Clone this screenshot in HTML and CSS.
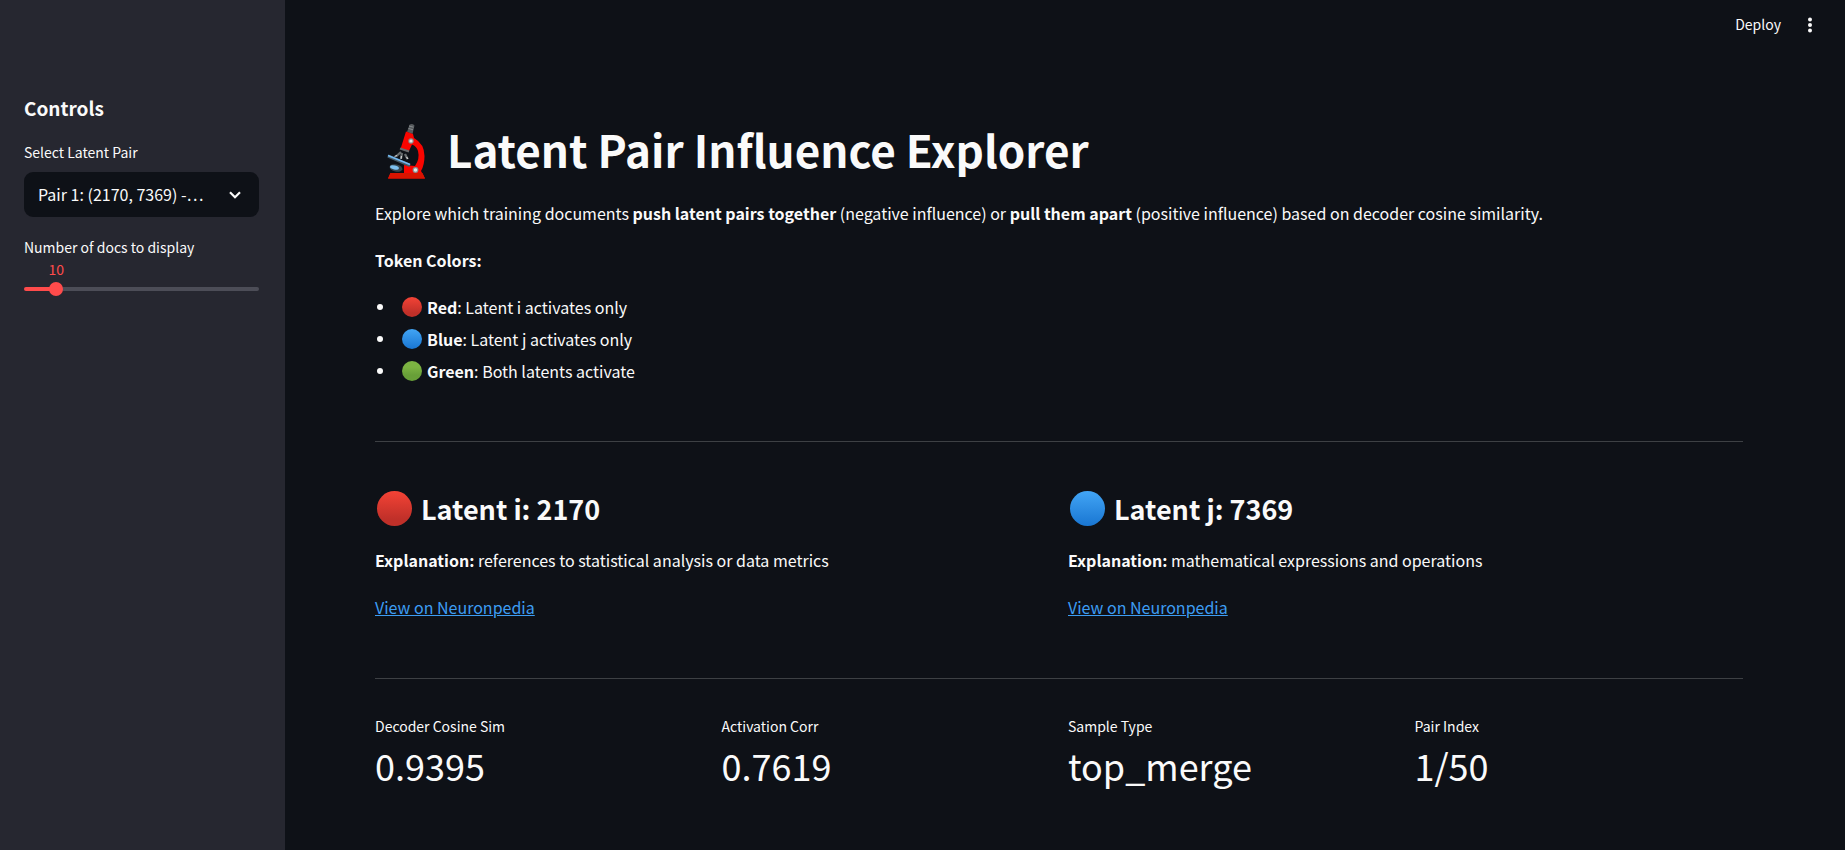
FILE: index.html
```html
<!DOCTYPE html>
<html lang="en">
<head>
  <meta charset="UTF-8">
  <meta name="viewport" content="width=device-width, initial-scale=1.0">
  <title>Latent Pair Influence Explorer</title>
  <link rel="stylesheet" href="styles.css">
</head>
<body>
  <!-- shared gradients for the token dots -->
  <svg class="defs" width="0" height="0" aria-hidden="true">
    <defs>
      <linearGradient id="dot-red" x1="0" y1="0" x2="0" y2="1">
        <stop offset="0" stop-color="#f44336"/>
        <stop offset="0.8" stop-color="#c03029"/>
      </linearGradient>
      <linearGradient id="dot-blue" x1="0" y1="0" x2="0" y2="1">
        <stop offset="0" stop-color="#42a5f5"/>
        <stop offset="1" stop-color="#1976d2"/>
      </linearGradient>
      <linearGradient id="dot-green" x1="0" y1="0" x2="0" y2="1">
        <stop offset="0.3" stop-color="#7cb342"/>
        <stop offset="0.7" stop-color="#689f38"/>
      </linearGradient>
    </defs>
  </svg>

  <div class="app">
    <aside class="sidebar">
      <h2>Controls</h2>

      <div class="form-group">
        <label for="pairSelect">Select Latent Pair</label>
        <div class="select-wrap">
          <select id="pairSelect">
            <option>Pair 1: (2170, 7369) -…</option>
          </select>
          <svg class="chevron" viewBox="0 0 12 8" aria-hidden="true">
            <path d="M1 1.2 L6 6.2 L11 1.2" fill="none" stroke="#fafafa" stroke-width="2.2"/>
          </svg>
        </div>
      </div>

      <div class="form-group">
        <label for="docCount">Number of docs to display</label>
        <div class="slider" style="--pos: 11.1%">
          <output for="docCount">10</output>
          <input type="range" id="docCount" min="5" max="50" value="10">
        </div>
      </div>
    </aside>

    <div class="content">
      <header class="toolbar">
        <button class="deploy">Deploy</button>
        <button class="menu" aria-label="Main menu">
          <svg viewBox="0 0 4 16" aria-hidden="true">
            <circle cx="2" cy="2.4" r="2"/>
            <circle cx="2" cy="8" r="2"/>
            <circle cx="2" cy="13.6" r="2"/>
          </svg>
        </button>
      </header>

      <main>
        <h1>
          <svg class="microscope" viewBox="0 0 38 56" aria-hidden="true">
            <path d="M20 9 L22.5 1.8 Q25 0 27.5 2.5 L25.5 11 Z" fill="#55595c"/>
            <path d="M22 3 L26.5 4.2 M21.4 5.4 L26 6.8" stroke="#85898c" stroke-width="1"/>
            <path d="M19 8.5 L26 11 L27 15 Q37.5 21 37.5 33 Q37.5 42 34 48 L38 55.5 H1 L3.5 50 H17 V42 L28 43 Q33 36 31 28 Q29.5 23 25 21.5 L21.5 29 L13.5 26 Z" fill="#fa0500"/>
            <path d="M3.5 50 H35.5 L38 55.5 H1 Z" fill="#d91400"/>
            <path d="M13 25.5 L22 28.5 M14 29 L9 33.5 M15 30 L14 35.5 M18 31 L20.5 36" stroke="#686c6e" stroke-width="2.3"/>
            <path d="M10 32.5 L7.5 33.5 M14.5 33 L14 36 M19.5 34 L21 36" stroke="#d4d4d4" stroke-width="1.2"/>
            <path d="M1 33 L23 42.5" stroke="#465b68" stroke-width="3"/>
            <path d="M1 32.5 L23 41.5" stroke="#72b8f2" stroke-width="1.7"/>
            <ellipse cx="9" cy="45" rx="6.5" ry="3.5" transform="rotate(12 9 45)" fill="#37474f"/>
            <ellipse cx="7.5" cy="44.5" rx="4.5" ry="2" transform="rotate(12 7.5 44.5)" fill="#7dc0f0"/>
            <circle cx="24" cy="18" r="2.7" fill="#8a8f8f"/>
            <circle cx="24" cy="18" r="1.6" fill="#e4e4e4"/>
            <circle cx="28.5" cy="47" r="2.9" fill="#8a8f8f"/>
            <circle cx="28.5" cy="47" r="1.8" fill="#e4e4e4"/>
          </svg>
          Latent Pair Influence Explorer
        </h1>

        <p>Explore which training documents <strong>push latent pairs together</strong> (negative influence) or <strong>pull them apart</strong> (positive influence) based on decoder cosine similarity.</p>
        <p><strong>Token Colors:</strong></p>

        <ul class="legend">
          <li>
            <svg class="dot" viewBox="0 0 20 20" aria-hidden="true"><circle cx="10" cy="10" r="10" fill="url(#dot-red)"/></svg>
            <span><strong>Red</strong>: Latent i activates only</span>
          </li>
          <li>
            <svg class="dot" viewBox="0 0 20 20" aria-hidden="true"><circle cx="10" cy="10" r="10" fill="url(#dot-blue)"/></svg>
            <span><strong>Blue</strong>: Latent j activates only</span>
          </li>
          <li>
            <svg class="dot" viewBox="0 0 20 20" aria-hidden="true"><circle cx="10" cy="10" r="10" fill="url(#dot-green)"/></svg>
            <span><strong>Green</strong>: Both latents activate</span>
          </li>
        </ul>

        <hr>

        <div class="latents">
          <section>
            <h3>
              <svg class="dot" viewBox="0 0 20 20" aria-hidden="true"><circle cx="10" cy="10" r="10" fill="url(#dot-red)"/></svg>
              Latent i: 2170
            </h3>
            <p><strong>Explanation:</strong> references to statistical analysis or data metrics</p>
            <p><a href="#">View on Neuronpedia</a></p>
          </section>
          <section>
            <h3>
              <svg class="dot" viewBox="0 0 20 20" aria-hidden="true"><circle cx="10" cy="10" r="10" fill="url(#dot-blue)"/></svg>
              Latent j: 7369
            </h3>
            <p><strong>Explanation:</strong> mathematical expressions and operations</p>
            <p><a href="#">View on Neuronpedia</a></p>
          </section>
        </div>

        <hr>

        <dl class="metrics">
          <div>
            <dt>Decoder Cosine Sim</dt>
            <dd>0.9395</dd>
          </div>
          <div>
            <dt>Activation Corr</dt>
            <dd>0.7619</dd>
          </div>
          <div>
            <dt>Sample Type</dt>
            <dd>top_merge</dd>
          </div>
          <div>
            <dt>Pair Index</dt>
            <dd>1/50</dd>
          </div>
        </dl>
      </main>
    </div>
  </div>
</body>
</html>
```

FILE: styles.css
```css
* {
  box-sizing: border-box;
}
body {
  margin: 0;
  background-color: #0e1117;
  color: #fafafa;
  font-family: "Source Sans Pro", "Noto Sans CJK SC", sans-serif;
  font-size: 16px;
  line-height: 29px;
}
h1, h2, h3, p, ul, dl, dd {
  margin: 0;
  padding: 0;
}
strong {
  font-weight: 600;
}
button, select {
  font-family: inherit;
  color: inherit;
  border: none;
  cursor: pointer;
}
.defs {
  position: absolute;
}
.app {
  display: flex;
  min-height: 100vh;
}

/* Sidebar */
.sidebar {
  flex: 0 0 285px;
  padding: 94px 26px 24px 24px;
  background-color: #262730;
}
.sidebar h2 {
  font-size: 19px;
  font-weight: 600;
  line-height: 28px;
  margin-bottom: 18px;
}
.form-group {
  margin-bottom: 18px;
}
label {
  display: block;
  font-size: 14px;
  line-height: 25px;
}
.select-wrap {
  display: grid;
  align-items: center;
  margin-top: 7px;
}
.select-wrap > * {
  grid-area: 1 / 1;
}
select {
  appearance: none;
  width: 100%;
  height: 45px;
  padding: 0 40px 2px 14px;
  border-radius: 9px;
  background-color: #0e1117;
  font-size: 16px;
  text-overflow: ellipsis;
}
.chevron {
  width: 12px;
  height: 8px;
  justify-self: end;
  margin-right: 18px;
  pointer-events: none;
}
.slider output {
  display: block;
  width: 14px;
  margin-left: calc((100% - 14px) * 0.111);
  color: #ff4b4b;
  font-size: 14px;
  line-height: 18px;
  text-align: center;
}
.slider input {
  appearance: none;
  display: block;
  width: 100%;
  height: 14px;
  margin: 4px 0 0;
  background: transparent;
}
.slider input::-webkit-slider-runnable-track {
  height: 4px;
  border-radius: 4px;
  background: linear-gradient(to right, #ff4b4b var(--pos), #4c4d57 var(--pos));
}
.slider input::-webkit-slider-thumb {
  appearance: none;
  width: 14px;
  height: 14px;
  margin-top: -5px;
  border-radius: 50%;
  background-color: #ff4b4b;
}

/* Toolbar */
.content {
  flex: 1;
  min-width: 0;
}
.toolbar {
  display: flex;
  justify-content: flex-end;
  align-items: center;
  gap: 27px;
  height: 50px;
  padding-right: 33px;
}
.toolbar button {
  padding: 0;
  background: none;
  font-size: 14px;
  line-height: 20px;
}
.toolbar .deploy {
  padding-bottom: 2px;
}
.menu svg {
  display: block;
  width: 4px;
  height: 16px;
  fill: #fafafa;
}

/* Main content */
main {
  padding: 58px 102px 48px 90px;
}
h1 {
  display: flex;
  align-items: center;
  gap: 22px;
  padding-left: 12px;
  font-size: 44px;
  font-weight: 700;
  line-height: 82px;
}
.microscope {
  width: 38px;
  height: 56px;
  margin-top: 4px;
}
main p {
  margin: 6px 0 18px;
}
main h1 + p {
  margin-top: 9px;
}
main p + p {
  margin-top: 0;
}
.legend {
  list-style: none;
}
.legend li {
  display: flex;
  align-items: center;
  gap: 5px;
  margin-bottom: 4px;
  line-height: 28px;
}
.legend li::before {
  content: "";
  width: 6px;
  height: 6px;
  margin: 0 14px 0 2px;
  border-radius: 50%;
  background-color: #fafafa;
}
.dot {
  width: 20px;
  height: 20px;
}
hr {
  height: 1px;
  margin: 56px 0 35px;
  border: none;
  background-color: #3d4044;
}
.latents {
  display: grid;
  grid-template-columns: repeat(2, 1fr);
  gap: 18px;
}
.latents p:last-child {
  margin-bottom: 0;
}
h3 {
  display: flex;
  align-items: center;
  gap: 9px;
  padding-left: 2px;
  font-size: 27px;
  font-weight: 600;
  line-height: 63px;
}
h3 .dot {
  width: 35px;
  height: 35px;
}
a {
  color: #3d9df3;
}
.metrics {
  display: grid;
  grid-template-columns: repeat(4, 1fr);
  gap: 18px;
}
dt {
  font-size: 14px;
  line-height: 25px;
}
dd {
  font-size: 36px;
  line-height: 53px;
}
```
